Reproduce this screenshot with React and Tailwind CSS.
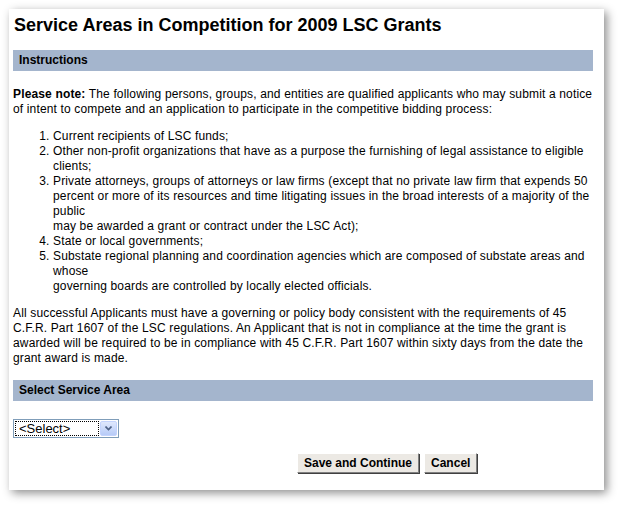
export default function App() {
  const items = [
    "Current recipients of LSC funds;",
    "Other non-profit organizations that have as a purpose the furnishing of legal assistance to eligible clients;",
    null,
    "State or local governments;",
    null,
  ];

  return (
    <div className="w-[618px] h-[505px] bg-white pt-[9px] pl-[9px] font-['Liberation_Sans',Arial,sans-serif] text-[12px] leading-[15px] text-black">
      <div className="w-[595px] h-[481px] bg-white shadow-[3px_3px_9px_rgba(0,0,0,0.45)] px-[4px] pt-[5px]">
        <h1 className="text-[18px] leading-[22px] font-bold px-[1px]">
          Service Areas in Competition for 2009 LSC Grants
        </h1>
        <div className="mt-[14px] w-[580px] h-[21px] bg-[#a4b5cd] px-[6px] flex items-center font-bold">
          Instructions
        </div>
        <div className="tracking-[0.15px]">
          <p className="mt-[16px]">
            <b>Please note:</b> The following persons, groups, and entities are qualified applicants who may submit a notice of intent to compete and an application to participate in the competitive bidding process:
          </p>
          <ol className="list-decimal pl-[40px] mt-[12px]">
            <li>{items[0]}</li>
            <li>{items[1]}</li>
            <li>
              Private attorneys, groups of attorneys or law firms (except that no private law firm that expends 50 percent or more of its resources and time litigating issues in the broad interests of a majority of the public
              <br />
              may be awarded a grant or contract under the LSC Act);
            </li>
            <li>{items[3]}</li>
            <li>
              Substate regional planning and coordination agencies which are composed of substate areas and whose
              <br />
              governing boards are controlled by locally elected officials.
            </li>
          </ol>
          <p className="mt-[12px]">
            All successful Applicants must have a governing or policy body consistent with the requirements of 45 C.F.R. Part 1607 of the LSC regulations. An Applicant that is not in compliance at the time the grant is awarded will be required to be in compliance with 45 C.F.R. Part 1607 within sixty days from the date the grant award is made.
          </p>
        </div>
        <div className="mt-[14px] w-[580px] h-[21px] bg-[#a4b5cd] px-[6px] flex items-center font-bold">
          Select Service Area
        </div>
        <div className="mt-[18px] w-[106px] h-[19px] border border-[#7f9db9] flex bg-white">
          <div className="flex-1 m-[1px] border border-dotted border-black flex items-center px-[3px] text-[13px]">
            &lt;Select&gt;
          </div>
          <div className="w-[17px] m-[1px] ml-0 rounded-[2px] bg-gradient-to-b from-[#dfe8fd] to-[#b7cbf7] border border-[#c3d3fd] flex items-center justify-center">
            <svg width="7" height="5" viewBox="0 0 7 5">
              <path d="M0.5 0.5 L3.5 3.5 L6.5 0.5" fill="none" stroke="#4d6185" strokeWidth="1.6" />
            </svg>
          </div>
        </div>
        <div className="mt-[15px] flex gap-[5px] pl-[284px]">
          <button className="h-[20px] px-[6px] bg-[#ece9e4] border border-t-white border-l-white border-r-[#808080] border-b-[#808080] shadow-[1px_1px_0_#404040] font-bold text-[12px] leading-none">
            Save and Continue
          </button>
          <button className="h-[20px] px-[6px] bg-[#ece9e4] border border-t-white border-l-white border-r-[#808080] border-b-[#808080] shadow-[1px_1px_0_#404040] font-bold text-[12px] leading-none">
            Cancel
          </button>
        </div>
      </div>
    </div>
  );
}
